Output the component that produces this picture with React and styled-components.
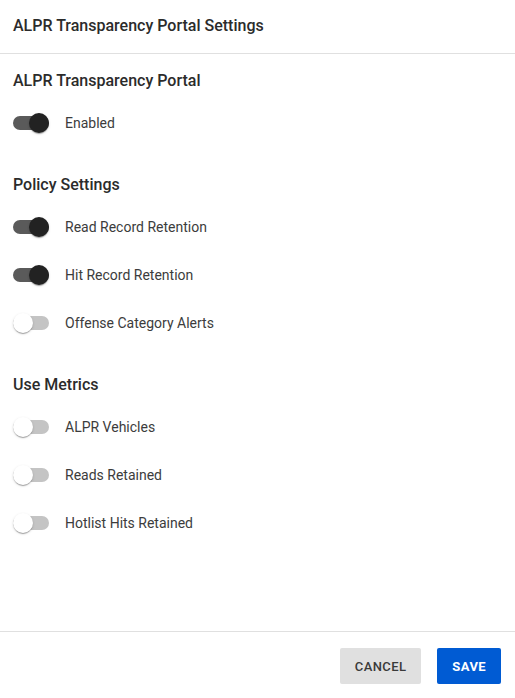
import styled, { createGlobalStyle } from "styled-components";

const GlobalStyle = createGlobalStyle`
  html, body {
    margin: 0;
    padding: 0;
    background: #fff;
    font-family: Roboto, "Liberation Sans", sans-serif;
  }
  * { box-sizing: border-box; }
`

const Dialog = styled.div`
  display: flex;
  flex-direction: column;
  width: 515px;
  height: 698px;
  background: #fff;
`

const Title = styled.h2`
  margin: 0;
  padding: 14px 13px 15px;
  font-size: 16px;
  line-height: 24px;
  font-weight: 500;
  color: #2b2b2b;
  border-bottom: 1px solid #e0e0e0;
`

const Content = styled.div`
  flex: 1;
  padding: 15px 13px;
`

const Section = styled.section`
  & + & {
    margin-top: 26px;
  }
`

const SectionTitle = styled.h3`
  margin: 0 0 6px;
  font-size: 16px;
  line-height: 24px;
  font-weight: 500;
  color: #2b2b2b;
`

const Row = styled.label`
  display: flex;
  align-items: center;
  height: 48px;
  gap: 16px;
  cursor: pointer;
`

const Track = styled.span`
  position: relative;
  display: inline-block;
  width: 36px;
  height: 14px;
  border-radius: 7px;
  background: ${p => (p.$on ? "#5a5a5a" : "#c4c4c4")};
`

const Thumb = styled.span`
  position: absolute;
  top: -3px;
  left: ${p => (p.$on ? "16px" : "0")};
  width: 20px;
  height: 20px;
  border-radius: 50%;
  background: ${p => (p.$on ? "#222" : "#fff")};
  box-shadow: 0 2px 1px -1px rgba(0,0,0,0.2), 0 1px 1px 0 rgba(0,0,0,0.14), 0 1px 3px 0 rgba(0,0,0,0.12);
`

const Label = styled.span`
  font-size: 14px;
  color: #3c3c3c;
`

const Footer = styled.div`
  display: flex;
  justify-content: flex-end;
  gap: 16px;
  padding: 16px 14px 14px;
  border-top: 1px solid #e0e0e0;
`

const Button = styled.button`
  height: 36px;
  padding: 0 15px;
  border: none;
  border-radius: 2px;
  font-family: Roboto, "Liberation Sans", sans-serif;
  font-size: 13px;
  font-weight: ${p => (p.$primary ? 700 : 500)};
  letter-spacing: 0.4px;
  text-transform: uppercase;
  color: ${p => (p.$primary ? "#fff" : "#3a3a3a")};
  background: ${p => (p.$primary ? "#005bd3" : "#e0e0e0")};
  cursor: pointer;
`

const Switch = ({ on, label }) => (
  <Row>
    <Track $on={on}>
      <Thumb $on={on} />
    </Track>
    <Label>{label}</Label>
  </Row>
)

const sections = [
  { title: "ALPR Transparency Portal", items: [["Enabled", true]] },
  {
    title: "Policy Settings",
    items: [
      ["Read Record Retention", true],
      ["Hit Record Retention", true],
      ["Offense Category Alerts", false],
    ],
  },
  {
    title: "Use Metrics",
    items: [
      ["ALPR Vehicles", false],
      ["Reads Retained", false],
      ["Hotlist Hits Retained", false],
    ],
  },
]

export default function App() {
  return (
    <>
      <GlobalStyle />
      <Dialog>
        <Title>ALPR Transparency Portal Settings</Title>
        <Content>
          {sections.map(s => (
            <Section key={s.title}>
              <SectionTitle>{s.title}</SectionTitle>
              {s.items.map(([label, on]) => (
                <Switch key={label} on={on} label={label} />
              ))}
            </Section>
          ))}
        </Content>
        <Footer>
          <Button>Cancel</Button>
          <Button $primary>Save</Button>
        </Footer>
      </Dialog>
    </>
  )
}
